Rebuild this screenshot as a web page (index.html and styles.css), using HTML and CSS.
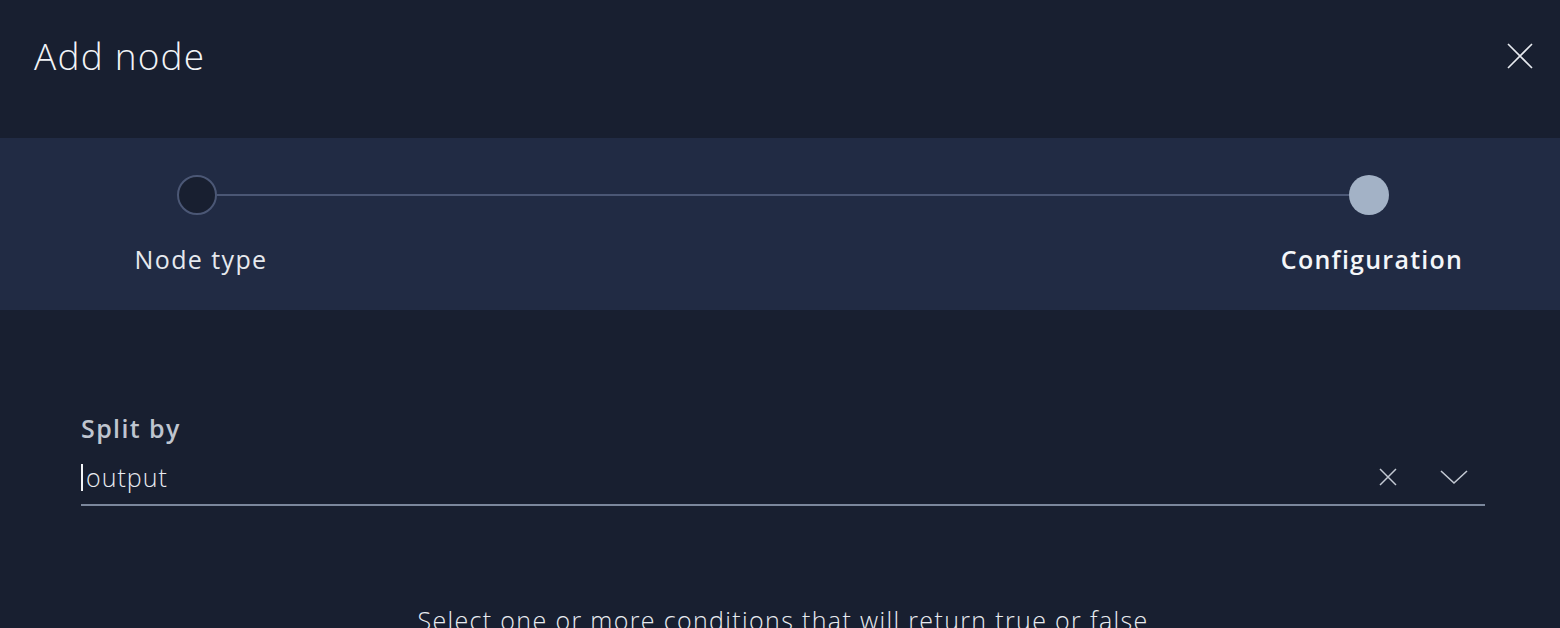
FILE: index.html
```html
<!DOCTYPE html>
<html>
<head>
<meta charset="utf-8">
<link rel="stylesheet" href="styles.css">
</head>
<body>
<div class="modal">
  <header class="header">
    <h1 class="title">Add node</h1>
    <button class="close" aria-label="Close">
      <svg width="26" height="26" viewBox="0 0 26 26"><path d="M1 1L25 25M25 1L1 25" stroke="#e8ebf0" stroke-width="1.6" fill="none"/></svg>
    </button>
  </header>
  <section class="stepper">
    <div class="track">
      <div class="step step-first">
        <div class="dot dot-empty"></div>
        <div class="label">Node type</div>
      </div>
      <div class="line"></div>
      <div class="step step-last">
        <div class="dot dot-active"></div>
        <div class="label label-active">Configuration</div>
      </div>
    </div>
  </section>
  <main class="content">
    <div class="field">
      <div class="field-label">Split by</div>
      <div class="input">
        <span class="caret"></span><span class="value">output</span>
        <span class="spacer"></span>
        <svg class="clear" width="18" height="18" viewBox="0 0 18 18"><path d="M1 1L17 17M17 1L1 17" stroke="#c3c9d3" stroke-width="1.5" fill="none"/></svg>
        <svg class="chev" width="28" height="16" viewBox="0 0 28 16"><path d="M1 2L14 14L27 2" stroke="#c3c9d3" stroke-width="1.6" fill="none"/></svg>
      </div>
    </div>
    <p class="hint">Select one or more conditions that will return true or false</p>
  </main>
</div>
</body>
</html>
```
FILE: styles.css
```css
* { box-sizing: border-box; }
html, body { margin: 0; padding: 0; }
body {
  background: #181f30;
  font-family: "Open Sans", "Noto Sans", sans-serif;
  color: #e9ecf1;
  width: 1560px;
  height: 628px;
  overflow: hidden;
}
.modal { display: flex; flex-direction: column; }
.header {
  height: 138px;
  display: flex;
  align-items: flex-start;
  justify-content: space-between;
  padding: 31px 27px 0 34px;
}
.title {
  margin: 0;
  font-weight: 300;
  font-size: 37px;
  line-height: 50px;
  color: #f2f4f7;
  letter-spacing: 1.2px;
}
.close {
  background: none;
  border: 0;
  padding: 0;
  margin-top: 12px;
  cursor: pointer;
  display: flex;
}
.stepper {
  background: #212b44;
  height: 172px;
  padding: 37px 0 0 0;
}
.track {
  display: flex;
  align-items: flex-start;
  padding: 0 96px 0 133px;
}
.step {
  display: flex;
  flex-direction: column;
  align-items: center;
}
.step-first { width: 136px; }
.step-last { width: 184px; }
.dot {
  width: 40px;
  height: 40px;
  border-radius: 50%;
}
.dot-empty { background: #181f30; border: 2px solid #4b5775; margin-left: -8px; }
.dot-active { background: #a3b2c6; margin-left: -6px; }
.line {
  flex: 1;
  height: 2px;
  background: #4b5775;
  margin: 19px -69px 0 -52px;
}
.label {
  margin-top: 26px;
  font-size: 25px;
  line-height: 36px;
  font-weight: 400;
  color: #e6e9ee;
  white-space: nowrap;
  letter-spacing: 1.4px;
}
.label-active { font-weight: 600; color: #f4f6f9; letter-spacing: 1.25px; }
.content {
  padding: 0 75px 0 81px;
}
.field { margin-top: 98px; }
.field-label {
  font-size: 25px;
  font-weight: 600;
  line-height: 40px;
  color: #bfc5cf;
  letter-spacing: 1.4px;
}
.input {
  margin-top: 8px;
  height: 50px;
  display: flex;
  align-items: center;
  border-bottom: 2px solid #7b879c;
  padding-bottom: 12px;
  padding-top: 6px;
}
.caret {
  width: 2px;
  height: 27px;
  background: #f2f4f7;
  margin-right: 3px;
}
.value {
  font-size: 25px;
  font-weight: 300;
  color: #e9ecf1;
  letter-spacing: 1px;
}
.spacer { flex: 1; }
.clear { margin-right: 43px; }
.chev { margin-right: 17px; }
.hint {
  margin: 99px 0 0 0;
  text-align: center;
  font-size: 25px;
  font-weight: 300;
  color: #e9ecf1;
  line-height: 30px;
  letter-spacing: 1.35px;
}
```
